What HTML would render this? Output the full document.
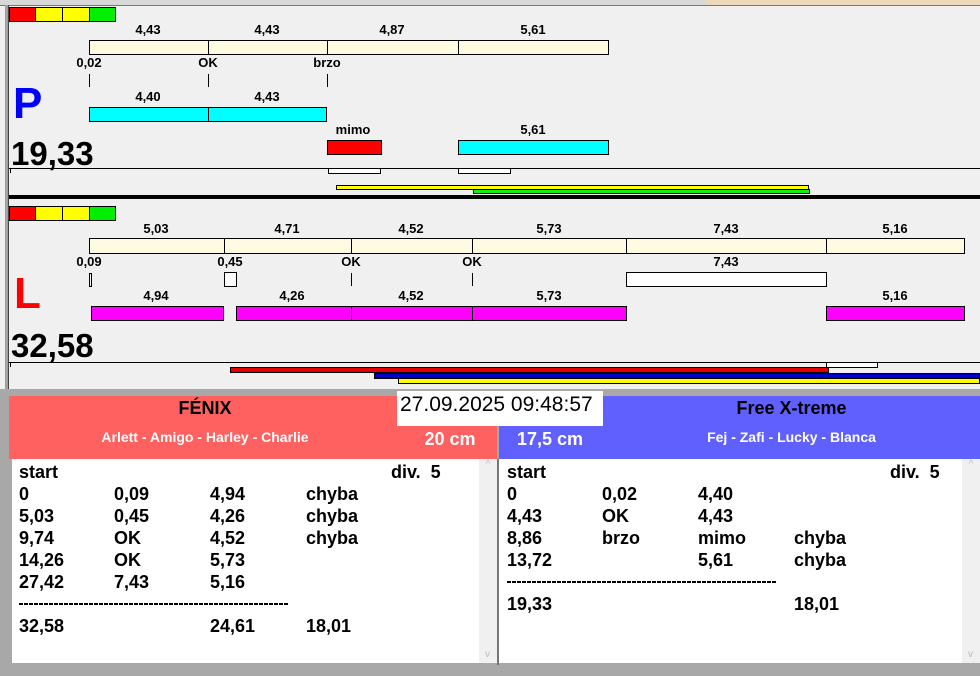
<!DOCTYPE html>
<html><head><meta charset="utf-8"><style>
*{margin:0;padding:0;box-sizing:border-box}
body{width:980px;height:676px;background:#f0f0f0;position:relative;overflow:hidden;font-family:"Liberation Sans",Arial,sans-serif;font-weight:bold;color:#000}
div{position:absolute}
.b{border:1px solid #000}
.l{font-size:13px;width:80px;text-align:center;line-height:14px}
.t{width:1px;background:#000}
.r{font-size:18px;line-height:22px;white-space:pre}
.d{height:2px;background:repeating-linear-gradient(90deg,#000 0 4px,transparent 4px 5px)}
</style></head><body>
<!-- top strip -->
<div style="left:0;top:0;width:980px;height:5px;background:#d8d8d8"></div>
<div style="left:705px;top:0;width:275px;height:5px;background:#ecd9bc"></div>
<div style="left:0;top:5px;width:980px;height:1px;background:#777"></div>
<div style="left:5px;top:5px;width:3px;height:390px;background:#a0a0a0"></div>
<div style="left:8px;top:5px;width:1px;height:390px;background:#444"></div>

<!-- P panel -->
<div class="b" style="left:9px;top:7px;width:27px;height:15px;background:#f00"></div>
<div class="b" style="left:35px;top:7px;width:28px;height:15px;background:#ff0"></div>
<div class="b" style="left:62px;top:7px;width:28px;height:15px;background:#ff0"></div>
<div class="b" style="left:89px;top:7px;width:27px;height:15px;background:#0e0"></div>

<div class="l" style="left:108px;top:23px">4,43</div>
<div class="l" style="left:227px;top:23px">4,43</div>
<div class="l" style="left:352px;top:23px">4,87</div>
<div class="l" style="left:493px;top:23px">5,61</div>
<div class="b" style="left:89px;top:40px;width:520px;height:15px;background:#fffbe0"></div>
<div class="t" style="left:208px;top:40px;height:15px"></div>
<div class="t" style="left:327px;top:40px;height:15px"></div>
<div class="t" style="left:458px;top:40px;height:15px"></div>
<div class="l" style="left:49px;top:56px">0,02</div>
<div class="l" style="left:168px;top:56px">OK</div>
<div class="l" style="left:287px;top:56px">brzo</div>
<div class="t" style="left:89px;top:74px;height:13px"></div>
<div class="t" style="left:208px;top:74px;height:13px"></div>
<div class="t" style="left:327px;top:74px;height:13px"></div>
<div style="left:13px;top:80px;font-size:44px;line-height:48px;color:#0000ff">P</div>
<div class="l" style="left:108px;top:90px">4,40</div>
<div class="l" style="left:227px;top:90px">4,43</div>
<div class="b" style="left:89px;top:107px;width:238px;height:15px;background:#00ffff"></div>
<div class="t" style="left:208px;top:107px;height:15px"></div>
<div class="l" style="left:313px;top:123px">mimo</div>
<div class="l" style="left:493px;top:123px">5,61</div>
<div class="b" style="left:327px;top:140px;width:55px;height:15px;background:#f00"></div>
<div class="b" style="left:458px;top:140px;width:151px;height:15px;background:#00ffff"></div>
<div style="left:11px;top:135px;font-size:33px;line-height:38px">19,33</div>
<div style="left:9px;top:168px;width:971px;height:1px;background:#000"></div>
<div class="t" style="left:10px;top:168px;height:5px"></div>
<div class="b" style="left:328px;top:168px;width:53px;height:6px;background:#fff"></div>
<div class="b" style="left:458px;top:168px;width:53px;height:6px;background:#fff"></div>
<div class="b" style="left:336px;top:185px;width:473px;height:5px;background:#ff0"></div>
<div class="b" style="left:473px;top:189px;width:337px;height:5px;background:#1e1"></div>
<div style="left:9px;top:195px;width:971px;height:4px;background:#000"></div>

<!-- L panel -->
<div class="b" style="left:9px;top:206px;width:27px;height:15px;background:#f00"></div>
<div class="b" style="left:35px;top:206px;width:28px;height:15px;background:#ff0"></div>
<div class="b" style="left:62px;top:206px;width:28px;height:15px;background:#ff0"></div>
<div class="b" style="left:89px;top:206px;width:27px;height:15px;background:#0e0"></div>
<div class="l" style="left:116px;top:222px">5,03</div>
<div class="l" style="left:247px;top:222px">4,71</div>
<div class="l" style="left:371px;top:222px">4,52</div>
<div class="l" style="left:509px;top:222px">5,73</div>
<div class="l" style="left:686px;top:222px">7,43</div>
<div class="l" style="left:855px;top:222px">5,16</div>
<div class="b" style="left:89px;top:238px;width:876px;height:16px;background:#fffbe0"></div>
<div class="t" style="left:224px;top:238px;height:16px"></div>
<div class="t" style="left:351px;top:238px;height:16px"></div>
<div class="t" style="left:472px;top:238px;height:16px"></div>
<div class="t" style="left:626px;top:238px;height:16px"></div>
<div class="t" style="left:826px;top:238px;height:16px"></div>
<div class="l" style="left:49px;top:255px">0,09</div>
<div class="l" style="left:190px;top:255px">0,45</div>
<div class="l" style="left:311px;top:255px">OK</div>
<div class="l" style="left:432px;top:255px">OK</div>
<div class="l" style="left:686px;top:255px">7,43</div>
<div class="b" style="left:89px;top:273px;width:3px;height:14px;background:#fff"></div>
<div class="b" style="left:224px;top:272px;width:13px;height:15px;background:#fff"></div>
<div class="t" style="left:351px;top:273px;height:13px"></div>
<div class="t" style="left:472px;top:273px;height:13px"></div>
<div class="b" style="left:626px;top:272px;width:201px;height:15px;background:#fff"></div>
<div style="left:14px;top:270px;font-size:44px;line-height:48px;color:#f00">L</div>
<div class="l" style="left:116px;top:289px">4,94</div>
<div class="l" style="left:252px;top:289px">4,26</div>
<div class="l" style="left:371px;top:289px">4,52</div>
<div class="l" style="left:509px;top:289px">5,73</div>
<div class="l" style="left:855px;top:289px">5,16</div>
<div class="b" style="left:91px;top:306px;width:133px;height:15px;background:#f0f"></div>
<div class="b" style="left:236px;top:306px;width:391px;height:15px;background:#f0f"></div>
<div class="t" style="left:351px;top:306px;height:15px"></div>
<div class="t" style="left:472px;top:306px;height:15px"></div>
<div class="b" style="left:826px;top:306px;width:139px;height:15px;background:#f0f"></div>
<div style="left:11px;top:327px;font-size:33px;line-height:38px">32,58</div>
<div style="left:9px;top:362px;width:971px;height:1px;background:#000"></div>
<div class="t" style="left:10px;top:362px;height:5px"></div>
<div class="b" style="left:826px;top:362px;width:52px;height:6px;background:#fff"></div>
<div class="b" style="left:230px;top:367px;width:599px;height:6px;background:#e00000"></div>
<div class="b" style="left:374px;top:373px;width:606px;height:6px;background:#0000cc"></div>
<div class="b" style="left:398px;top:378px;width:582px;height:6px;background:#ff0"></div>

<!-- bottom -->
<div style="left:0;top:389px;width:980px;height:287px;background:#a8a8a8"></div>
<div style="left:9px;top:396px;width:488px;height:63px;background:#ff6060"></div>
<div style="left:499px;top:396px;width:481px;height:63px;background:#6060ff"></div>
<div style="left:9px;top:396px;width:392px;font-size:18px;line-height:24px;text-align:center">FÉNIX</div>
<div style="left:9px;top:428px;width:392px;font-size:14px;line-height:18px;text-align:center;color:#fff">Arlett - Amigo - Harley - Charlie</div>
<div style="left:397px;top:391px;width:206px;height:35px;background:#fff;font-weight:normal;font-size:21px;line-height:28px;padding-left:3px">27.09.2025 09:48:57</div>
<div style="left:410px;top:427px;width:80px;font-size:18px;line-height:24px;text-align:center;color:#fff">20 cm</div>
<div style="left:505px;top:427px;width:90px;font-size:18px;line-height:24px;text-align:center;color:#fff">17,5 cm</div>
<div style="left:603px;top:396px;width:377px;font-size:18px;line-height:24px;text-align:center">Free X-treme</div>
<div style="left:603px;top:428px;width:377px;font-size:14px;line-height:18px;text-align:center;color:#fff">Fej - Zafi - Lucky - Blanca</div>

<div style="left:12px;top:459px;width:485px;height:204px;background:#fff"></div>
<div style="left:479px;top:459px;width:18px;height:204px;background:#f0f0f0;color:#bbb;font-size:10px;text-align:center;font-weight:normal">^<div style="left:6px;top:190px">v</div></div>
<div style="left:497px;top:459px;width:2px;height:206px;background:#777"></div>
<div style="left:499px;top:459px;width:481px;height:204px;background:#fff"></div>
<div style="left:962px;top:459px;width:18px;height:204px;background:#f0f0f0;color:#bbb;font-size:10px;text-align:center;font-weight:normal">^<div style="left:6px;top:190px">v</div></div>

<div class="r" style="left:19px;top:461px">start</div>
<div class="r" style="left:391px;top:461px">div.  5</div>
<div class="r" style="left:19px;top:483px">0</div><div class="r" style="left:114px;top:483px">0,09</div><div class="r" style="left:210px;top:483px">4,94</div><div class="r" style="left:306px;top:483px">chyba</div>
<div class="r" style="left:19px;top:505px">5,03</div><div class="r" style="left:114px;top:505px">0,45</div><div class="r" style="left:210px;top:505px">4,26</div><div class="r" style="left:306px;top:505px">chyba</div>
<div class="r" style="left:19px;top:527px">9,74</div><div class="r" style="left:114px;top:527px">OK</div><div class="r" style="left:210px;top:527px">4,52</div><div class="r" style="left:306px;top:527px">chyba</div>
<div class="r" style="left:19px;top:549px">14,26</div><div class="r" style="left:114px;top:549px">OK</div><div class="r" style="left:210px;top:549px">5,73</div>
<div class="r" style="left:19px;top:571px">27,42</div><div class="r" style="left:114px;top:571px">7,43</div><div class="r" style="left:210px;top:571px">5,16</div>
<div class="d" style="left:19px;top:603px;width:269px"></div>
<div class="r" style="left:19px;top:615px">32,58</div><div class="r" style="left:210px;top:615px">24,61</div><div class="r" style="left:306px;top:615px">18,01</div>

<div class="r" style="left:507px;top:461px">start</div>
<div class="r" style="left:890px;top:461px">div.  5</div>
<div class="r" style="left:507px;top:483px">0</div><div class="r" style="left:602px;top:483px">0,02</div><div class="r" style="left:698px;top:483px">4,40</div>
<div class="r" style="left:507px;top:505px">4,43</div><div class="r" style="left:602px;top:505px">OK</div><div class="r" style="left:698px;top:505px">4,43</div>
<div class="r" style="left:507px;top:527px">8,86</div><div class="r" style="left:602px;top:527px">brzo</div><div class="r" style="left:698px;top:527px">mimo</div><div class="r" style="left:794px;top:527px">chyba</div>
<div class="r" style="left:507px;top:549px">13,72</div><div class="r" style="left:698px;top:549px">5,61</div><div class="r" style="left:794px;top:549px">chyba</div>
<div class="d" style="left:507px;top:581px;width:269px"></div>
<div class="r" style="left:507px;top:593px">19,33</div><div class="r" style="left:794px;top:593px">18,01</div>
</body></html>
